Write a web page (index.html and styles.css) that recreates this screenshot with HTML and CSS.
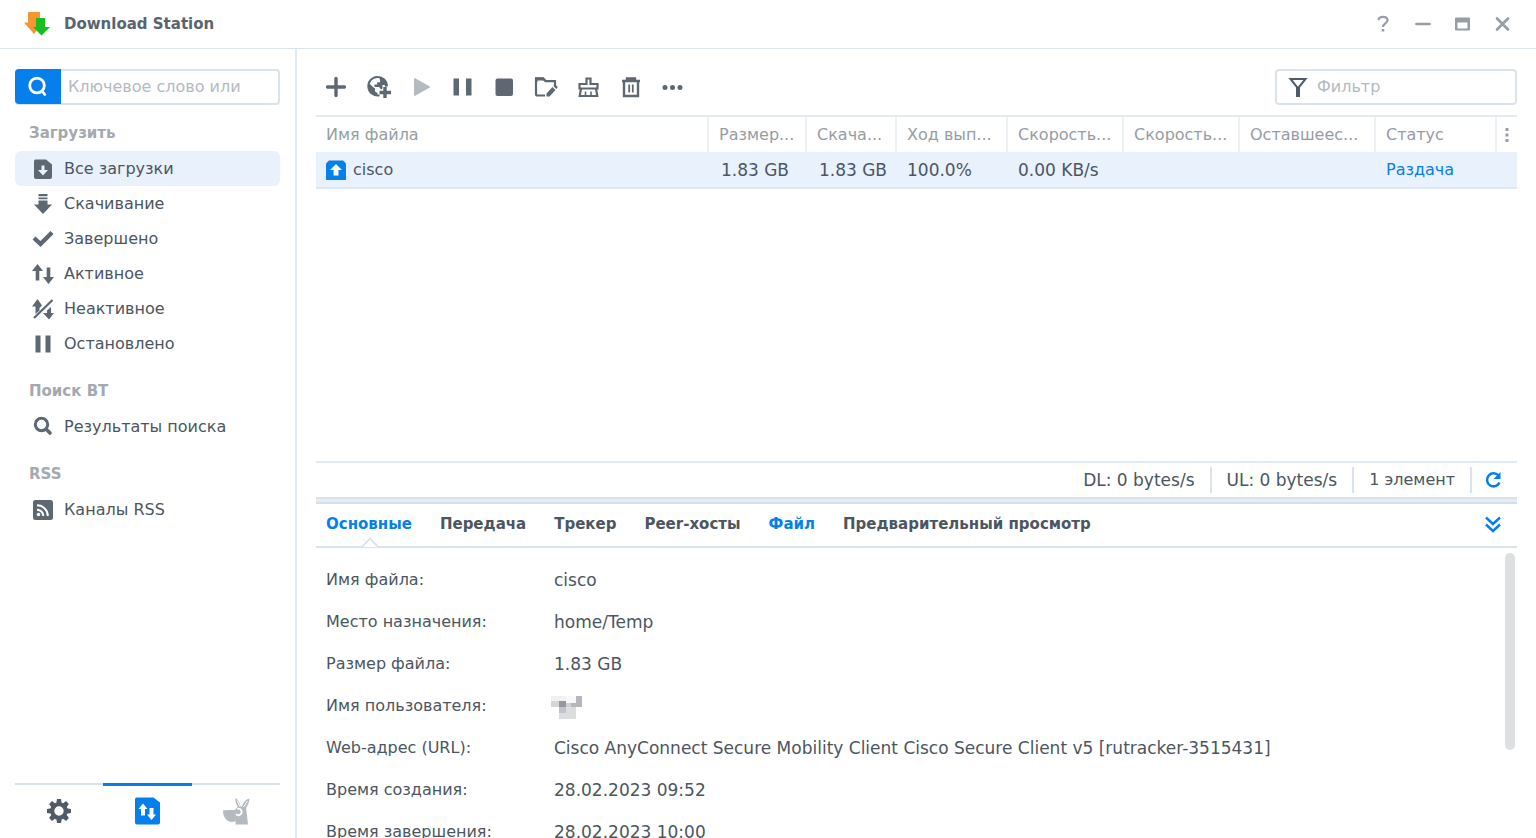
FILE: index.html
```html
<!DOCTYPE html>
<html lang="ru">
<head>
<meta charset="utf-8">
<title>Download Station</title>
<link rel="stylesheet" href="styles.css">
</head>
<body>
<div class="window">
  <header class="titlebar">
    <svg class="logo" width="28" height="26" viewBox="0 0 28 26"><path fill="#f79433" d="M5 1h12v10h4L11 23 1 11.500h4z"/><path fill="#18bd22" d="M13 7h9v9h5l-8.500 8.500L10 16h3z"/></svg>
    <h1 class="title">Download Station</h1>
    <div class="window-controls">
      <button class="control" aria-label="Справка"><svg width="20" height="20" viewBox="0 0 20 20"><path d="M6.500 6.300C6.700 1.700 15.500 1.700 15.500 6.300c0 3-4.500 3.400-4.500 6.700" fill="none" stroke="#969da4" stroke-width="2.200"/><path fill="#969da4" d="M9.700 15h2.600v2.500H9.700z"/></svg></button>
      <button class="control" aria-label="Свернуть"><svg width="20" height="20" viewBox="0 0 20 20"><path d="M4.500 10h13" stroke="#969da4" stroke-width="2.600" stroke-linecap="round"/></svg></button>
      <button class="control" aria-label="Развернуть"><svg width="20" height="20" viewBox="0 0 20 20"><path fill="#969da4" fill-rule="evenodd" d="M4 3.500h13q1 0 1 1V15.500q0 1-1 1h-13q-1 0-1-1v-11q0-1 1-1zM5.500 8.500v6h10v-6z"/></svg></button>
      <button class="control" aria-label="Закрыть"><svg width="20" height="20" viewBox="0 0 20 20"><path d="M5 4.500l11 11m0-11l-11 11" stroke="#969da4" stroke-width="2.600" stroke-linecap="round"/></svg></button>
    </div>
  </header>

  <div class="body">
    <aside class="sidebar">
      <form class="search">
        <button class="search-button" type="button" aria-label="Поиск"><svg width="22" height="22" viewBox="0 0 22 22" fill="none" stroke="#fff" stroke-width="2.800" stroke-linecap="round"><circle cx="10" cy="9.500" r="7.300"/><path d="M15 15l2.800 3.500"/></svg></button>
        <input class="search-input" type="text" placeholder="Ключевое слово или" aria-label="Ключевое слово">
      </form>
      <nav class="menu">
        <section class="group">
          <h2 class="group-title">Загрузить</h2>
          <a class="item selected" href="#"><svg class="item-icon" viewBox="0 0 22 22"><path fill="#5d6872" fill-rule="evenodd" d="M3.500 1.500H14l6 5V19q0 2-2 2H4q-2 0-2-2V3.500q0-2 1.500-2zM9.500 7.500v4.500H6l5 5.500 5-5.500h-3.500V7.500z"/></svg>Все загрузки</a>
          <a class="item" href="#"><svg class="item-icon" viewBox="0 0 22 22"><path fill="#5d6872" d="M6.500 1h9v2.300h-9zM6.500 4.500h9v1.700h-9zM6.500 7.500h9v4H20L11 21 2 11.500h4.500z"/></svg>Скачивание</a>
          <a class="item" href="#"><svg class="item-icon" viewBox="0 0 22 22"><path d="M2 10l6.500 6L20 4.500" fill="none" stroke="#5d6872" stroke-width="4.400"/></svg>Завершено</a>
          <a class="item" href="#"><svg class="item-icon" viewBox="0 0 22 22"><path fill="#5d6872" d="M0 8l5.500-7L11 8H7.300v9.500H3.700V8zM11 14l5.500 7 5.500-7h-3.700V4.500h-3.600V14z"/></svg>Активное</a>
          <a class="item" href="#"><svg class="item-icon" viewBox="0 0 22 22"><path fill="#5d6872" d="M0 8.500L5.500 1 10 7.500 7.500 10V8.500v4L3.500 16V8.500zM11 15l6 6.500 5-6.500h-3V9L15 12.500V15z"/><path d="M2 20L20.500 2" stroke="#5d6872" stroke-width="2.200"/></svg>Неактивное</a>
          <a class="item" href="#"><svg class="item-icon" viewBox="0 0 22 22"><path fill="#5d6872" d="M3.500 2.500h5v17h-5zM13.500 2.500h5v17h-5z"/></svg>Остановлено</a>
        </section>
        <section class="group">
          <h2 class="group-title">Поиск BT</h2>
          <a class="item" href="#"><svg class="item-icon" viewBox="0 0 22 22" fill="none" stroke="#5d6872"><circle cx="9.500" cy="8.500" r="6.200" stroke-width="3"/><path d="M14.500 13.500l3.500 3.500" stroke-width="3.600" stroke-linecap="round"/></svg>Результаты поиска</a>
        </section>
        <section class="group">
          <h2 class="group-title">RSS</h2>
          <a class="item" href="#"><svg class="item-icon" viewBox="0 0 22 22"><rect x="1" y="1" width="20" height="20" rx="2.500" fill="#5d6872"/><g fill="none" stroke="#fff" stroke-width="2"><path d="M5 6.200A10.800 10.800 0 0 1 15.800 17"/><path d="M5 10.700A6.300 6.300 0 0 1 11.300 17"/></g><circle cx="6.500" cy="15.500" r="1.800" fill="#fff"/></svg>Каналы RSS</a>
        </section>
      </nav>
      <div class="switcher">
        <button class="switch" aria-label="Настройки"><svg width="28" height="28" viewBox="0 0 28 28"><g fill="#4f5b66"><path id="tooth" d="M12 2h4l1 6h-6z"/><use href="#tooth" transform="rotate(45 14 14)"/><use href="#tooth" transform="rotate(90 14 14)"/><use href="#tooth" transform="rotate(135 14 14)"/><use href="#tooth" transform="rotate(180 14 14)"/><use href="#tooth" transform="rotate(225 14 14)"/><use href="#tooth" transform="rotate(270 14 14)"/><use href="#tooth" transform="rotate(315 14 14)"/></g><circle cx="14" cy="14" r="6.700" fill="none" stroke="#4f5b66" stroke-width="4"/></svg></button>
        <button class="switch current" aria-label="Загрузки"><svg width="28" height="28" viewBox="0 0 28 28"><path fill="#057feb" d="M3.500 .5h17l6.500 5V25.500q0 2-2 2h-21q-2 0-2-2V2.500q0-2 1.500-2z"/><path fill="#fff" d="M5.500 12l4.500-5.500L14.500 12h-2.500v6.500h-4V12zM14 17.500l4.500 5.500 4.500-5.500H20.500V11h-4v6.500z"/></svg></button>
        <button class="switch" aria-label="eMule"><svg width="28" height="28" viewBox="0 0 28 28"><path fill="#b5bac0" d="M13.500 1c3 2 4.500 5 5 8.500h1.500c1-4 3.500-7 7.500-8-.3 4-1.500 7-3.500 9.500.8 5.500 1.500 11 2 16.500H13.500v-3.500C8 27 .8 22.500 1 13.500 4.500 12.500 9 13 13 13c1-1.600 1.700-2.500 3-3-2-2.500-3-5.500-2.500-9z"/><path d="M15 3.500l3 6M25.500 4l-4 6" stroke="#fff" stroke-width="1"/><path d="M14 17a3.200 3.200 0 1 0 1-5" fill="none" stroke="#fff" stroke-width="1.800"/></svg></button>
      </div>
    </aside>

    <main class="main">
      <div class="toolbar">
        <button class="tool" aria-label="Создать"><svg viewBox="0 0 26 26"><path d="M13 4.500v17M4.500 13h17" stroke="#5d6872" stroke-width="3.400" stroke-linecap="round"/></svg></button>
        <button class="tool" aria-label="Добавить URL"><svg viewBox="0 0 26 26"><path d="M14.500 21.300A9.300 9.300 0 1 1 21.900 12.500" fill="none" stroke="#5d6872" stroke-width="2"/><path fill="#5d6872" d="M3.300 8.500L8 13l2 1.500v3l2.500 1.500v3C7 21.500 2.500 17 3.300 8.500zM14.500 2.800l6 3.700 2 5-2 1.500-1-2h-2v3.500l-1.500 1-2-2.500H9.500V10.500h2.700V8.200h3z"/><path fill="#5d6872" d="M18.300 13h3.400v3.800H26v3.400h-4.300V24h-3.400v-3.800H14.500v-3.400h3.800z"/></svg></button>
        <button class="tool" aria-label="Возобновить" disabled><svg viewBox="0 0 26 26"><path fill="#b5bac0" d="M7 5q0-1.200 1.200-.7l14.600 8.200q.7.500 0 1L8.200 21.700Q7 22.200 7 21z"/></svg></button>
        <button class="tool" aria-label="Приостановить"><svg viewBox="0 0 26 26"><path fill="#5d6872" d="M4.500 4.500H10v17H4.500zM17 4.500h5.500v17H17z"/></svg></button>
        <button class="tool" aria-label="Остановить"><svg viewBox="0 0 26 26"><rect x="4.500" y="4.500" width="17.500" height="17.500" rx="2" fill="#5d6872"/></svg></button>
        <button class="tool" aria-label="Изменить назначение"><svg viewBox="0 0 26 26"><path d="M12 21.500H4.500q-1.500 0-1.500-1.500V4.500h7l2.500 2.700H22v5" fill="none" stroke="#5d6872" stroke-width="2.200"/><path fill="#5d6872" d="M2 3.300h8.500l3 3.200H4.500V8H2zM13.500 19.500l6-6.500 3 3-6 6.500h-3zM20.300 12l1-1q.7-.7 1.500 0l1.500 1.500q.7.800 0 1.500l-1 1z"/></svg></button>
        <button class="tool" aria-label="Очистить"><svg viewBox="0 0 26 26"><g fill="none" stroke="#5d6872" stroke-width="2.200"><path d="M11.500 10V4.500h4V10h7v4.500h-18V10zM6 14.500L4.700 22h17.600L21 14.500"/><path d="M10.500 22v-4.500M16 22v-4.500" stroke-width="1.600"/></g></svg></button>
        <button class="tool" aria-label="Удалить"><svg viewBox="0 0 26 26"><g fill="none" stroke="#5d6872" stroke-width="2.400"><path d="M5 7h18M10 6.500V4.500h8v2M7 7v15h14V7"/><path d="M12.200 10.500v8M15.800 10.500v8" stroke-width="1.800"/></g></svg></button>
        <button class="tool" aria-label="Ещё"><svg viewBox="0 0 26 26" fill="#5d6872"><circle cx="6" cy="13.500" r="2.500"/><circle cx="13.500" cy="13.500" r="2.500"/><circle cx="21" cy="13.500" r="2.500"/></svg></button>
        <label class="filter">
          <svg width="22" height="22" viewBox="0 0 22 22"><path d="M3.500 3h15L12 11v9h-2v-9z" fill="none" stroke="#4f5b66" stroke-width="2"/></svg>
          <input class="filter-input" type="text" placeholder="Фильтр" aria-label="Фильтр">
        </label>
      </div>

      <div class="list">
        <table class="tasks">
          <colgroup><col><col class="w-size"><col class="w-done"><col class="w-progress"><col class="w-speed"><col class="w-speed"><col class="w-left"><col class="w-status"><col class="w-more"></colgroup>
          <thead><tr><th>Имя файла</th><th>Размер...</th><th>Скача...</th><th>Ход вып...</th><th>Скорость...</th><th>Скорость...</th><th>Оставшеес...</th><th>Статус</th><th class="more"><svg width="4" height="14" viewBox="0 0 4 14" fill="#969da4"><path d="M.5 0h3v3h-3zM.5 5.500h3v3h-3zM.5 11h3v3h-3z"/></svg></th></tr></thead>
          <tbody><tr><td><span class="name"><svg width="20" height="20" viewBox="0 0 20 20"><path fill="#057feb" d="M3 .5h14l3 3V20H0V3.500z"/><path fill="#fff" d="M4 10l6-6 6 6h-3.500v5.500h-5V10z"/></svg>cisco</span></td><td class="value number">1.83 GB</td><td class="value number">1.83 GB</td><td class="value">100.0%</td><td class="value">0.00 KB/s</td><td></td><td></td><td class="status">Раздача</td><td></td></tr></tbody>
        </table>
      </div>

      <div class="statusbar">
        <span class="stat rate">DL: 0 bytes/s</span>
        <span class="stat rate">UL: 0 bytes/s</span>
        <span class="stat">1 элемент</span>
        <button class="refresh" aria-label="Обновить"><svg width="18" height="18" viewBox="0 0 18 18"><path d="M14.800 5A6.500 6.500 0 1 0 15.500 11.500" fill="none" stroke="#057feb" stroke-width="2.500"/><path fill="#057feb" d="M16.500 1v7H9.500z"/></svg></button>
      </div>
      <div class="splitter"></div>

      <section class="details">
        <div class="tabs">
          <button class="tab active">Основные</button>
          <button class="tab">Передача</button>
          <button class="tab">Трекер</button>
          <button class="tab">Peer-хосты</button>
          <button class="tab linked">Файл</button>
          <button class="tab">Предварительный просмотр</button>
          <button class="collapse" aria-label="Свернуть панель"><svg width="18" height="18" viewBox="0 0 18 18"><path d="M2 2.500L9 9l7-6.500M2 9.500L9 16l7-6.500" fill="none" stroke="#057feb" stroke-width="2.400"/></svg></button>
        </div>
        <dl class="info">
          <dt>Имя файла:</dt><dd>cisco</dd>
          <dt>Место назначения:</dt><dd>home/Temp</dd>
          <dt>Размер файла:</dt><dd>1.83 GB</dd>
          <dt>Имя пользователя:</dt><dd><svg class="mosaic" width="31" height="24" viewBox="0 0 31 24"><path fill="#f0f1f2" d="M0 0h15v5H0z"/><path fill="#f8f8f9" d="M15 0h10v7H15z"/><path fill="#d4d7da" d="M0 5h8v6H0z"/><path fill="#9297a1" d="M8 5h7v6H8z"/><path fill="#d0d2d5" d="M15 7h5v4h-5z"/><path fill="#b4b7bc" d="M20 7h5V0h6v11H20z"/><path fill="#c1c4c8" d="M8 11h7v6H8z"/><path fill="#dcddde" d="M15 11h10v12H8v-6h7z"/></svg></dd>
          <dt>Web-адрес (URL):</dt><dd>Cisco AnyConnect Secure Mobility Client Cisco Secure Client v5 [rutracker-3515431]</dd>
          <dt>Время создания:</dt><dd>28.02.2023 09:52</dd>
          <dt>Время завершения:</dt><dd>28.02.2023 10:00</dd>
        </dl>
        <div class="scroll-thumb"></div>
      </section>
    </main>
  </div>
</div>
</body>
</html>
```
FILE: styles.css
```css
* { box-sizing: border-box; }
body {
  margin: 0;
  font: 16px/20px Verdana, "DejaVu Sans", sans-serif;
  color: #4b5661;
  background: #fff;
}
button, input { font: inherit; color: inherit; }
button {
  display: flex;
  align-items: center;
  justify-content: center;
  padding: 0;
  border: 0;
  background: none;
}
svg { display: block; flex: none; }

.window { display: flex; flex-direction: column; height: 100vh; overflow: hidden; }
.titlebar {
  display: flex;
  align-items: center;
  flex: none;
  height: 49px;
  padding: 0 24px 0 23px;
  border-bottom: 1px solid #dbe5ee;
}
.title { margin: 0 0 0 13px; font-size: 15px; color: #5a646e; }
.window-controls { display: flex; gap: 20px; margin-left: auto; }

.body { display: flex; flex: 1; min-height: 0; }

.sidebar {
  display: flex;
  flex-direction: column;
  flex: none;
  width: 297px;
  padding: 20px 15px 0;
  border-right: 2px solid #e3ebf2;
}
.search { display: flex; height: 36px; border: 2px solid #dae3ed; border-radius: 4px; }
.search-button { flex: none; width: 46px; margin: -2px 0 -1px -2px; background: #057feb; border-radius: 4px 0 0 4px; }
.search-input { flex: 1; min-width: 0; padding: 0 7px; border: 0; background: none; outline: 0; }
::placeholder { color: #b5bac0; opacity: 1; }
.menu { flex: 1; padding-top: 10px; }
.group { margin-bottom: 12px; }
.group-title { margin: 0; padding-left: 14px; font-size: 15px; line-height: 36px; color: #a3a9af; }
.item {
  display: flex;
  align-items: center;
  gap: 10px;
  height: 35px;
  padding-left: 17px;
  border-radius: 6px;
  color: inherit;
  text-decoration: none;
}
.item.selected { background: #e9f1fc; }
.item-icon { width: 22px; height: 22px; }
.switcher { display: grid; grid-template-columns: repeat(3, 1fr); height: 55px; border-top: 2px solid #dae3ed; }
.switch { margin-top: -2px; padding-bottom: 2px; border-top: 3px solid transparent; }
.switch.current { border-color: #057feb; }

.main { display: flex; flex-direction: column; flex: 1; min-width: 0; padding: 20px 19px 0; }
.toolbar { display: flex; align-items: center; gap: 16px; flex: none; height: 36px; padding-left: 7px; }
.tool, .tool svg { width: 26px; height: 26px; }
.filter {
  display: flex;
  align-items: center;
  gap: 8px;
  width: 242px;
  height: 36px;
  margin-left: auto;
  padding: 0 10px;
  border: 2px solid #dae3ed;
  border-radius: 4px;
}
.filter-input { flex: 1; min-width: 0; padding: 0; border: 0; outline: 0; background: none; }

.list { flex: 1; min-height: 0; margin-top: 10px; border-top: 2px solid #e3ebf2; }
.tasks { width: 100%; table-layout: fixed; border-collapse: separate; border-spacing: 0; }
.tasks th, .tasks td { padding: 0 0 0 10px; text-align: left; white-space: nowrap; }
.tasks th { height: 35px; font-weight: 400; color: #969da4; border-right: 2px solid #edf1f5; }
.tasks th:last-child { border-right: 0; }
.tasks td { height: 37px; background: #e9f1fc; border-bottom: 2px solid #dde8f3; }
.tasks .value { font-size: 17px; }
.tasks .number { padding: 0 18px 0 0; text-align: right; }
.tasks .number + .number { padding-right: 10px; }
.tasks .status { color: #057feb; }
.tasks .more { padding-left: 8px; }
.name { display: flex; align-items: center; gap: 7px; }
.w-size { width: 98px; }
.w-done { width: 90px; }
.w-progress { width: 111px; }
.w-speed { width: 116px; }
.w-left { width: 136px; }
.w-status { width: 121px; }
.w-more { width: 20px; }

.statusbar { display: flex; align-items: center; justify-content: flex-end; flex: none; height: 36px; border-top: 2px solid #e3ebf2; }
.stat { padding: 2px 15px; line-height: 22px; border-right: 2px solid #dae3ed; }
.stat.rate { font-size: 17px; }
.refresh { margin: 0 15px 0 12px; }
.splitter { flex: none; height: 7px; background: #e6edf2; border-top: 2px solid #dae3eb; border-bottom: 2px solid #d3dee8; }

.details { position: relative; flex: none; height: 334px; overflow: hidden; }
.tabs { display: flex; gap: 28px; height: 44px; padding: 0 15px 2px 10px; border-bottom: 2px solid #dae3ed; }
.tab { position: relative; font-size: 15px; font-weight: 700; }
.tab.active, .tab.linked { color: #057feb; }
.tab.active::after {
  content: "";
  position: absolute;
  bottom: -10px;
  left: calc(50% - 6px);
  width: 12px;
  height: 12px;
  border: solid #dae3ed;
  border-width: 2px 0 0 2px;
  background: #fff;
  transform: rotate(45deg);
  clip-path: polygon(0 0, 100% 0, 0 100%);
}
.collapse { margin-left: auto; }
.info { display: grid; grid-template-columns: 228px 1fr; margin: 0; padding: 11px 10px; line-height: 42px; }
.info dd { margin: 0; font-size: 17px; white-space: nowrap; }
.mosaic { margin: 11px 0 0 -3px; }
.scroll-thumb { position: absolute; top: 49px; right: 2px; width: 10px; height: 197px; border-radius: 5px; background: #dedfe0; }
```
